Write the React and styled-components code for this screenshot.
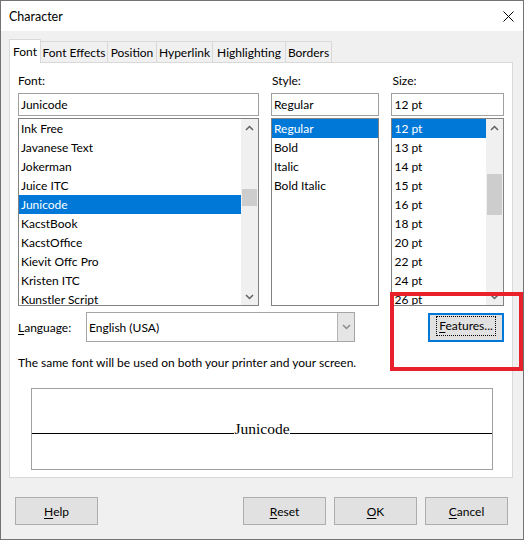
import React from 'react';
import styled, { createGlobalStyle } from 'styled-components';

const UI = 'Lato, "Noto Sans", "Liberation Sans", sans-serif';

const Global = createGlobalStyle`
  html, body { margin: 0; padding: 0; }
  body {
    width: 524px; height: 540px; overflow: hidden;
    font-family: ${UI}; font-size: 12px; color: #000;
    background: #fff;
  }
  * { box-sizing: border-box; }
`;

const Window = styled.div`
  position: relative;
  width: 524px; height: 540px;
  border: 1px solid #737373;
  background: #f0f0f0;
  display: flex; flex-direction: column;
`;

const TitleBar = styled.div`
  height: 30px; flex: none;
  background: #fff;
  display: flex; align-items: center; justify-content: space-between;
  padding: 0 9px 0 8px;
  font-size: 12.5px;
`;

const Body = styled.div`
  flex: 1;
  padding: 8px 0 0 8px;
  display: flex; flex-direction: column;
`;

const TabStrip = styled.div`
  height: 23px; display: flex; align-items: flex-end;
  position: relative; z-index: 1;
`;

const Tab = styled.div`
  width: ${p => p.$w}px;
  height: ${p => (p.$active ? 24 : 21)}px;
  margin-bottom: ${p => (p.$active ? -1 : 0)}px;
  background: ${p => (p.$active ? '#fff' : '#f0f0f0')};
  border: 1px solid #d9d9d9;
  border-bottom: none;
  border-right: ${p => (p.$last || p.$active ? '1px solid #d9d9d9' : 'none')};
  margin-right: ${p => (p.$active ? -1 : 0)}px;
  display: flex; align-items: center; justify-content: center;
  padding-bottom: ${p => (p.$active ? 1 : 0)}px;
  white-space: nowrap;
  position: relative; z-index: ${p => (p.$active ? 2 : 1)};
`;

const Page = styled.div`
  width: 504px; height: 416px;
  background: #fff;
  border: 1px solid #d9d9d9;
  padding: 10px 8px 0 8px;
  display: flex; flex-direction: column;
`;

const Columns = styled.div`
  display: flex; gap: 12px;
`;

const Column = styled.div`
  width: ${p => p.$w}px;
  display: flex; flex-direction: column;
`;

const Label = styled.div`
  height: 16px; line-height: 16px; margin-bottom: 4px;
  padding-left: ${p => p.$pad || 0}px;
`;

const TextField = styled.div`
  height: 23px; margin-bottom: 2px;
  border: 1px solid #a0a0a0;
  padding-left: 2px;
  display: flex; align-items: center;
  background: #fff;
`;

const ListBox = styled.div`
  height: 188px;
  border: 1px solid #828282;
  background: #fff;
  display: flex; overflow: hidden;
`;

const Items = styled.div`
  flex: 1; min-width: 0; overflow: hidden;
`;

const Item = styled.div`
  height: 19px; line-height: 19px;
  padding-left: 2px;
  white-space: nowrap;
  background: ${p => (p.$sel ? '#0078d7' : 'transparent')};
  color: ${p => (p.$sel ? '#fff' : '#000')};
`;

const ScrollBar = styled.div`
  width: 17px; flex: none;
  background: #f0f0f0;
  display: flex; flex-direction: column;
`;

const ArrowBtn = styled.div`
  height: 17px; flex: none;
  display: flex; align-items: center; justify-content: center;
`;

const Track = styled.div`
  flex: 1; display: flex; flex-direction: column;
`;

const Thumb = styled.div`
  margin: ${p => p.$top}px 1px 0 1px;
  height: ${p => p.$h}px;
  background: #cdcdcd;
`;

const LangRow = styled.div`
  margin-top: 6px; height: 30px;
  display: flex; align-items: center;
`;

const LangLabel = styled.div`
  width: 68px;
`;

const Combo = styled.div`
  width: 269px; height: 30px;
  border: 1px solid #a5a5a5;
  background: #fff;
  display: flex; align-items: stretch;
`;

const ComboText = styled.div`
  flex: 1; padding-left: 2px;
  display: flex; align-items: center;
`;

const ComboBtn = styled.div`
  width: 17px;
  background: #e5e5e5;
  border-left: 1px solid #b4b4b4;
  display: flex; align-items: center; justify-content: center;
`;

const FeaturesBtn = styled.div`
  margin-left: auto;
  width: 76px; height: 29px;
  border: 2px solid #0078d7;
  background: #e1e1e1;
  display: flex; align-items: center; justify-content: center;
  padding-bottom: 3px;
`;

const FocusLabel = styled.span`
  outline: 1px dotted #000;
  outline-offset: 0px;
  padding: 0 2px;
  line-height: 18px;
`;

const Note = styled.div`
  margin-top: 13px; height: 16px; line-height: 16px;
`;

const Preview = styled.div`
  margin: 17px 0 0 13px;
  width: 462px; height: 82px;
  border: 1px solid #a0a0a0;
  padding-top: 31px;
`;

const SampleRow = styled.div`
  display: flex; align-items: baseline;
`;

const Rule = styled.div`
  flex: 1; height: 1px; background: #000;
`;

const Sample = styled.span`
  font-family: "Liberation Serif", "DejaVu Serif", serif;
  font-size: 15.5px; line-height: 18px;
`;

const ButtonRow = styled.div`
  margin-top: 19px;
  padding: 0 15px 0 6px;
  display: flex; gap: 8px;
`;

const Button = styled.div`
  width: 83px; height: 28px;
  background: #e1e1e1;
  border: 1px solid #adadad;
  display: flex; align-items: center; justify-content: center;
  margin-right: ${p => (p.$push ? 'auto' : '0')};
`;

const Key = styled.span`
  text-decoration: underline;
  text-underline-offset: 2px;
`;

const Annotation = styled.div`
  position: absolute;
  left: 389px; top: 291px;
  width: 133px; height: 79px;
  border: 4px solid #e8212a;
  pointer-events: none;
`;

const Chevron = ({ up, color = '#606060' }) => (
  <svg width="9" height="6" viewBox="0 0 9 6">
    <polyline
      points={up ? '1,5 4.5,1.5 8,5' : '1,1 4.5,4.5 8,1'}
      fill="none" stroke={color} strokeWidth="1.5"
    />
  </svg>
);

const Close = () => (
  <svg width="11" height="11" viewBox="0 0 11 11">
    <path d="M0.5 0.5 L10.5 10.5 M10.5 0.5 L0.5 10.5" stroke="#000" strokeWidth="1" fill="none" />
  </svg>
);

const List = ({ items, sel, thumb }) => (
  <ListBox>
    <Items>
      {items.map(it => <Item key={it} $sel={it === sel}>{it}</Item>)}
    </Items>
    {thumb && (
      <ScrollBar>
        <ArrowBtn><Chevron up /></ArrowBtn>
        <Track><Thumb $top={thumb[0]} $h={thumb[1]} /></Track>
        <ArrowBtn><Chevron /></ArrowBtn>
      </ScrollBar>
    )}
  </ListBox>
);

const fonts = ['Ink Free', 'Javanese Text', 'Jokerman', 'Juice ITC', 'Junicode', 'KacstBook', 'KacstOffice', 'Kievit Offc Pro', 'Kristen ITC', 'Kunstler Script'];
const styles = ['Regular', 'Bold', 'Italic', 'Bold Italic'];
const sizes = ['12 pt', '13 pt', '14 pt', '15 pt', '16 pt', '18 pt', '20 pt', '22 pt', '24 pt', '26 pt'];
const tabs = [['Font', 32], ['Font Effects', 67], ['Position', 49], ['Hyperlink', 56], ['Highlighting', 73], ['Borders', 47]];

export default function App() {
  return (
    <>
      <Global />
      <Window>
        <TitleBar>
          <span>Character</span>
          <Close />
        </TitleBar>
        <Body>
          <TabStrip>
            {tabs.map(([t, w], i) => (
              <Tab key={t} $w={w} $active={i === 0} $last={i === tabs.length - 1}>{t}</Tab>
            ))}
          </TabStrip>
          <Page>
            <Columns>
              <Column $w={242}>
                <Label>Font:</Label>
                <TextField>Junicode</TextField>
                <List items={fonts} sel="Junicode" thumb={[53, 17]} />
              </Column>
              <Column $w={109}>
                <Label $pad={1}>Style:</Label>
                <TextField>Regular</TextField>
                <List items={styles} sel="Regular" />
              </Column>
              <Column $w={113}>
                <Label $pad={1}>Size:</Label>
                <TextField>12 pt</TextField>
                <List items={sizes} sel="12 pt" thumb={[38, 41]} />
              </Column>
            </Columns>
            <LangRow>
              <LangLabel><Key>L</Key>anguage:</LangLabel>
              <Combo>
                <ComboText>English (USA)</ComboText>
                <ComboBtn><Chevron color="#8a8a8a" /></ComboBtn>
              </Combo>
              <FeaturesBtn><FocusLabel><Key>F</Key>eatures...</FocusLabel></FeaturesBtn>
            </LangRow>
            <Note>The same font will be used on both your printer and your screen.</Note>
            <Preview>
              <SampleRow>
                <Rule />
                <Sample>Junicode</Sample>
                <Rule />
              </SampleRow>
            </Preview>
          </Page>
          <ButtonRow>
            <Button $push><Key>H</Key>elp</Button>
            <Button><Key>R</Key>eset</Button>
            <Button><Key>O</Key>K</Button>
            <Button><Key>C</Key>ancel</Button>
          </ButtonRow>
        </Body>
        <Annotation />
      </Window>
    </>
  );
}
